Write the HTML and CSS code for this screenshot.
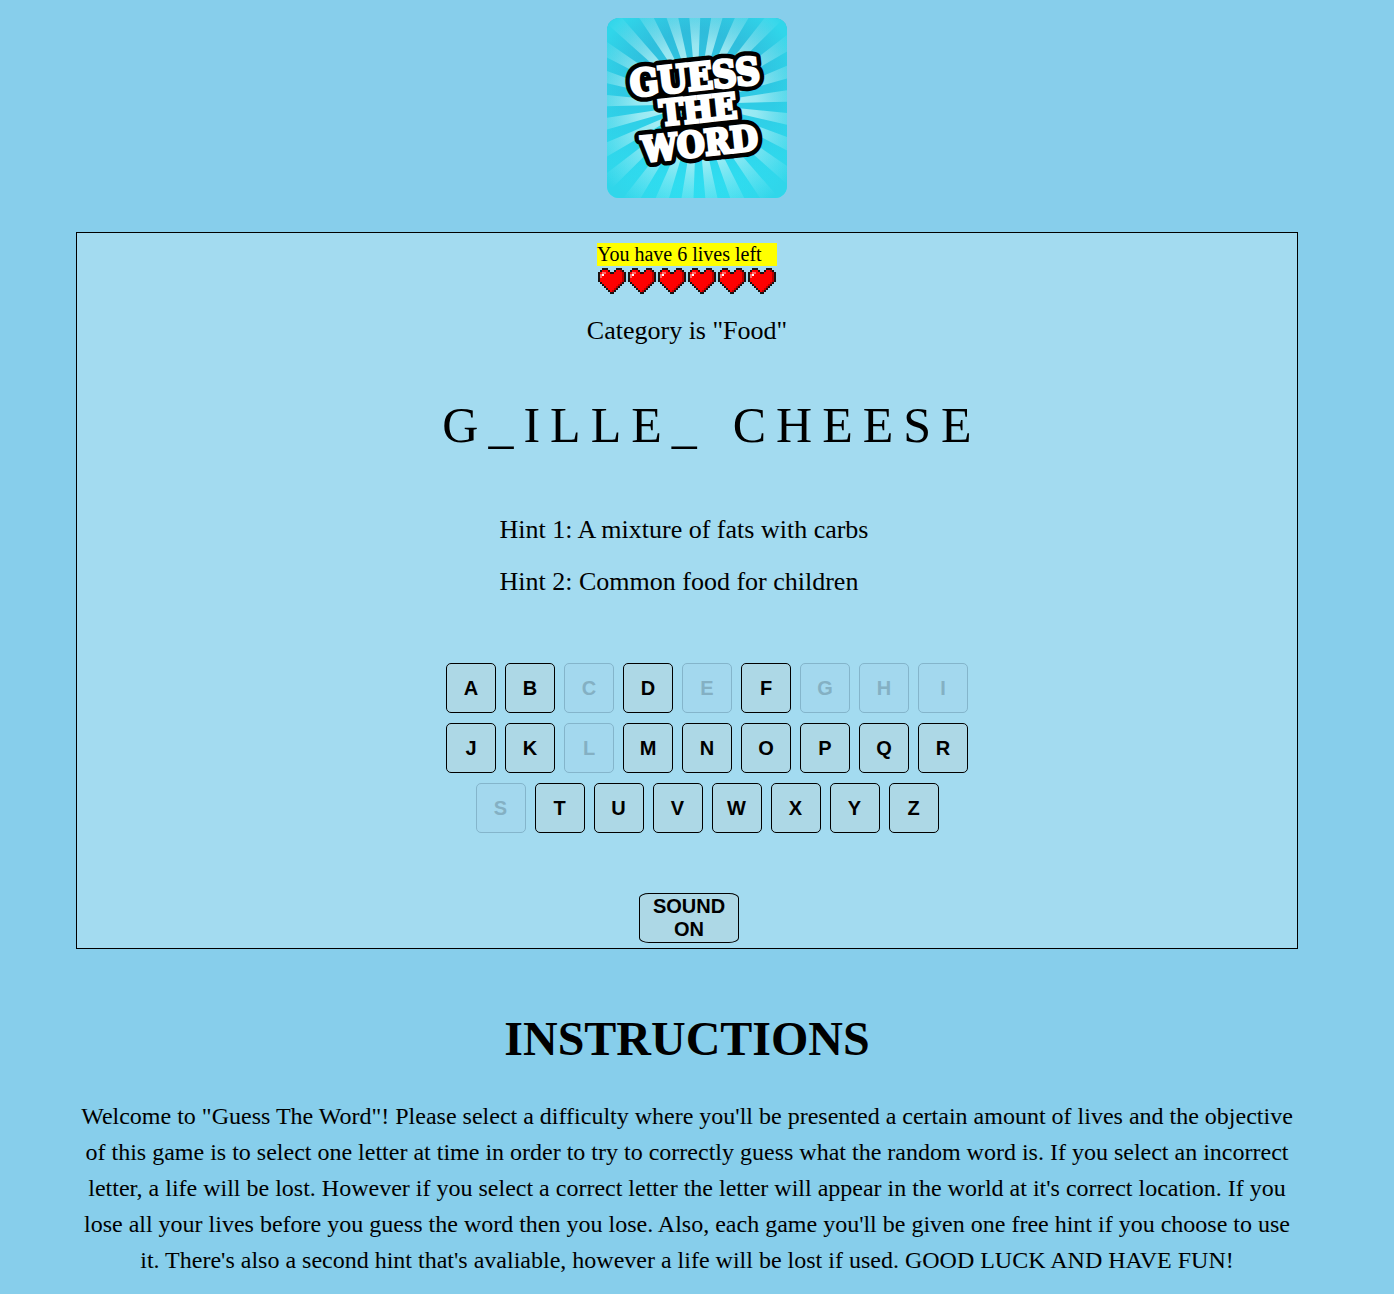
FILE: index.html
```html
<!DOCTYPE html>
<html lang="en">
<head>
<meta charset="utf-8">
<title>Guess The Word</title>
<link rel="stylesheet" href="styles.css">
</head>
<body>
<header class="site-header">
  <svg class="logo" viewBox="0 0 180 180" role="img" aria-label="Guess The Word">
    <defs>
      <linearGradient id="base" x1="0" y1="0" x2="0" y2="1">
        <stop offset="0" stop-color="#2fb9d9"/>
        <stop offset="1" stop-color="#2fe0f2"/>
      </linearGradient>
      <radialGradient id="corner" gradientUnits="userSpaceOnUse" cx="90" cy="90" r="127">
        <stop offset="0.6" stop-color="#30d6ea" stop-opacity="0"/>
        <stop offset="0.9" stop-color="#30d6ea"/>
      </radialGradient>
      <radialGradient id="ray" gradientUnits="userSpaceOnUse" cx="90" cy="86" r="120">
        <stop offset="0" stop-color="#c8f7fa"/>
        <stop offset="0.5" stop-color="#b8f2f7" stop-opacity="0.75"/>
        <stop offset="0.75" stop-color="#a0ecf4" stop-opacity="0.4"/>
        <stop offset="1" stop-color="#90e8f2" stop-opacity="0"/>
      </radialGradient>
    </defs>
    <rect width="180" height="180" fill="url(#base)"/>
    <rect width="180" height="180" fill="url(#corner)"/>
    <g id="rays" fill="url(#ray)"></g>
    <g class="logo-text" transform="rotate(-6 90 90)">
      <g class="logo-outline">
        <text class="logo-wide" x="91" y="72">GUESS</text>
        <text class="logo-narrow" x="91" y="104">THE</text>
        <text class="logo-narrow" x="89" y="138">WORD</text>
      </g>
      <g class="logo-face" aria-hidden="true">
        <text class="logo-wide" x="91" y="72">GUESS</text>
        <text class="logo-narrow" x="91" y="104">THE</text>
        <text class="logo-narrow" x="89" y="138">WORD</text>
      </g>
    </g>
  </svg>
</header>

<main class="page">
  <section class="game">
    <div class="status">
      <p class="lives">You have 6 lives left</p>
      <div class="hearts" id="hearts"></div>
    </div>
    <p class="category">Category is "Food"</p>
    <p class="word"><span>G_ILLE_</span> <span>CHEESE</span></p>
    <div class="hints">
      <p class="hint">Hint 1: A mixture of fats with carbs</p>
      <p class="hint">Hint 2: Common food for children</p>
    </div>
    <div class="keyboard">
      <div class="row">
        <button class="key">A</button>
        <button class="key">B</button>
        <button class="key" disabled>C</button>
        <button class="key">D</button>
        <button class="key" disabled>E</button>
        <button class="key">F</button>
        <button class="key" disabled>G</button>
        <button class="key" disabled>H</button>
        <button class="key" disabled>I</button>
      </div>
      <div class="row">
        <button class="key">J</button>
        <button class="key">K</button>
        <button class="key" disabled>L</button>
        <button class="key">M</button>
        <button class="key">N</button>
        <button class="key">O</button>
        <button class="key">P</button>
        <button class="key">Q</button>
        <button class="key">R</button>
      </div>
      <div class="row">
        <button class="key" disabled>S</button>
        <button class="key">T</button>
        <button class="key">U</button>
        <button class="key">V</button>
        <button class="key">W</button>
        <button class="key">X</button>
        <button class="key">Y</button>
        <button class="key">Z</button>
      </div>
    </div>
    <button class="sound">SOUND ON</button>
  </section>

  <section class="instructions">
    <h1 class="title">INSTRUCTIONS</h1>
    <p class="copy">Welcome to "Guess The Word"! Please select a difficulty where you'll be presented a certain amount of lives and the objective of this game is to select one letter at time in order to try to correctly guess what the random word is. If you select an incorrect letter, a life will be lost. However if you select a correct letter the letter will appear in the world at it's correct location. If you lose all your lives before you guess the word then you lose. Also, each game you'll be given one free hint if you choose to use it. There's also a second hint that's avaliable, however a life will be lost if used. GOOD LUCK AND HAVE FUN!</p>
  </section>
</main>
<script src="game.js"></script>
</body>
</html>
```

FILE: styles.css
```css
* {
  box-sizing: border-box;
}

body {
  margin: 0;
  background: skyblue;
  color: #000;
  font-family: "Liberation Serif", "Times New Roman", serif;
}

p,
h1 {
  margin: 0;
}

.site-header {
  display: flex;
  justify-content: center;
  padding: 18px 0 34px;
}

.logo {
  width: 180px;
  height: 180px;
  border-radius: 12px;
}

.logo-text {
  font-family: "DejaVu Serif Condensed", "DejaVu Serif", serif;
  font-weight: bold;
  text-anchor: middle;
}

.logo-wide {
  font-size: 37px;
}

.logo-narrow {
  font-size: 35px;
}

.logo-outline {
  fill: #000;
  stroke: #000;
  stroke-width: 12px;
  stroke-linejoin: round;
}

.logo-face {
  fill: #fff;
  stroke: #fff;
  stroke-width: 3px;
  stroke-linejoin: miter;
}

.page {
  padding: 0 96px 20px 76px;
}

.game {
  display: flex;
  flex-direction: column;
  align-items: center;
  padding: 10px 0 5px;
  border: 1px solid #000;
  background: #a3dbf0;
}

.status {
  width: 180px;
}

.lives {
  background: yellow;
  font-size: 20px;
  line-height: 23px;
}

.hearts {
  display: flex;
}

.heart {
  width: 30px;
  height: 30px;
}

.category {
  margin-top: 20px;
  font-size: 26px;
  line-height: 30px;
}

.word {
  display: flex;
  gap: 26px;
  margin-top: 50px;
  padding-left: 50px;
  font-size: 50px;
  line-height: 58px;
  letter-spacing: 10px;
}

.hints {
  display: grid;
  gap: 22px;
  margin-top: 61px;
  padding-right: 6px;
}

.hint {
  font-size: 26px;
  line-height: 30px;
}

.keyboard {
  display: grid;
  gap: 10px;
  margin-top: 66px;
  padding-left: 40px;
}

.row {
  display: flex;
  justify-content: center;
  gap: 9px;
}

.key,
.sound {
  height: 50px;
  border: 1px solid #000;
  background: lightblue;
  color: #000;
  font-family: "Liberation Sans", Arial, sans-serif;
  font-size: 20px;
  font-weight: bold;
}

.key {
  width: 50px;
  padding: 0;
  border-radius: 5px;
}

.key:disabled {
  border-color: #84b5cb;
  background: #a3d8ee;
  color: #84b0c3;
}

.sound {
  width: 100px;
  margin: 60px 0 0 4px;
  padding: 0 6px;
  border-radius: 10px / 5px;
}

.instructions {
  text-align: center;
}

.title {
  margin-top: 62px;
  font-size: 48px;
  line-height: 56px;
}

.copy {
  margin-top: 31px;
  font-size: 24px;
  line-height: 36px;
}
```

FILE: game.js
```js
const SVG_NS = "http://www.w3.org/2000/svg";

// Sunburst behind the logo lettering.
const rays = document.getElementById("rays");
const count = 25;
for (let i = 0; i < count; i++) {
  const start = (i * 2 * Math.PI) / count + 0.1;
  const end = start + Math.PI / count;
  const ray = document.createElementNS(SVG_NS, "polygon");
  const point = (a) => `${90 + 140 * Math.cos(a)},${86 + 140 * Math.sin(a)}`;
  ray.setAttribute("points", `90,86 ${point(start)} ${point(end)}`);
  rays.appendChild(ray);
}

// Pixel heart: k outline, r red, w highlight, p pale, d dark red.
const HEART = [
  "..kkk....kkk..",
  ".krrrk..krrdk.",
  "krpprrkkrrrrdk",
  "kpwrrrrrrrrrdk",
  "kprrrrrrrrrrdk",
  "krrrrrrrrrrrdk",
  "krrrrrrrrrrrdk",
  ".krrrrrrrrrdk.",
  "..krrrrrrrdk..",
  "...krrrrrdk...",
  "....krrrdk....",
  ".....krdk.....",
  "......kk......",
];
const COLORS = { k: "#1a1212", r: "#f00", w: "#fff", p: "#f66", d: "#b80000" };
const hearts = document.getElementById("hearts");
for (let n = 0; n < 6; n++) {
  const svg = document.createElementNS(SVG_NS, "svg");
  svg.setAttribute("class", "heart");
  svg.setAttribute("viewBox", "-0.5 -1 15 15");
  svg.setAttribute("shape-rendering", "crispEdges");
  HEART.forEach((line, y) => {
    [...line].forEach((cell, x) => {
      if (cell === ".") return;
      const rect = document.createElementNS(SVG_NS, "rect");
      rect.setAttribute("x", x);
      rect.setAttribute("y", y);
      rect.setAttribute("width", 1);
      rect.setAttribute("height", 1);
      rect.setAttribute("fill", COLORS[cell]);
      svg.appendChild(rect);
    });
  });
  hearts.appendChild(svg);
}
```
